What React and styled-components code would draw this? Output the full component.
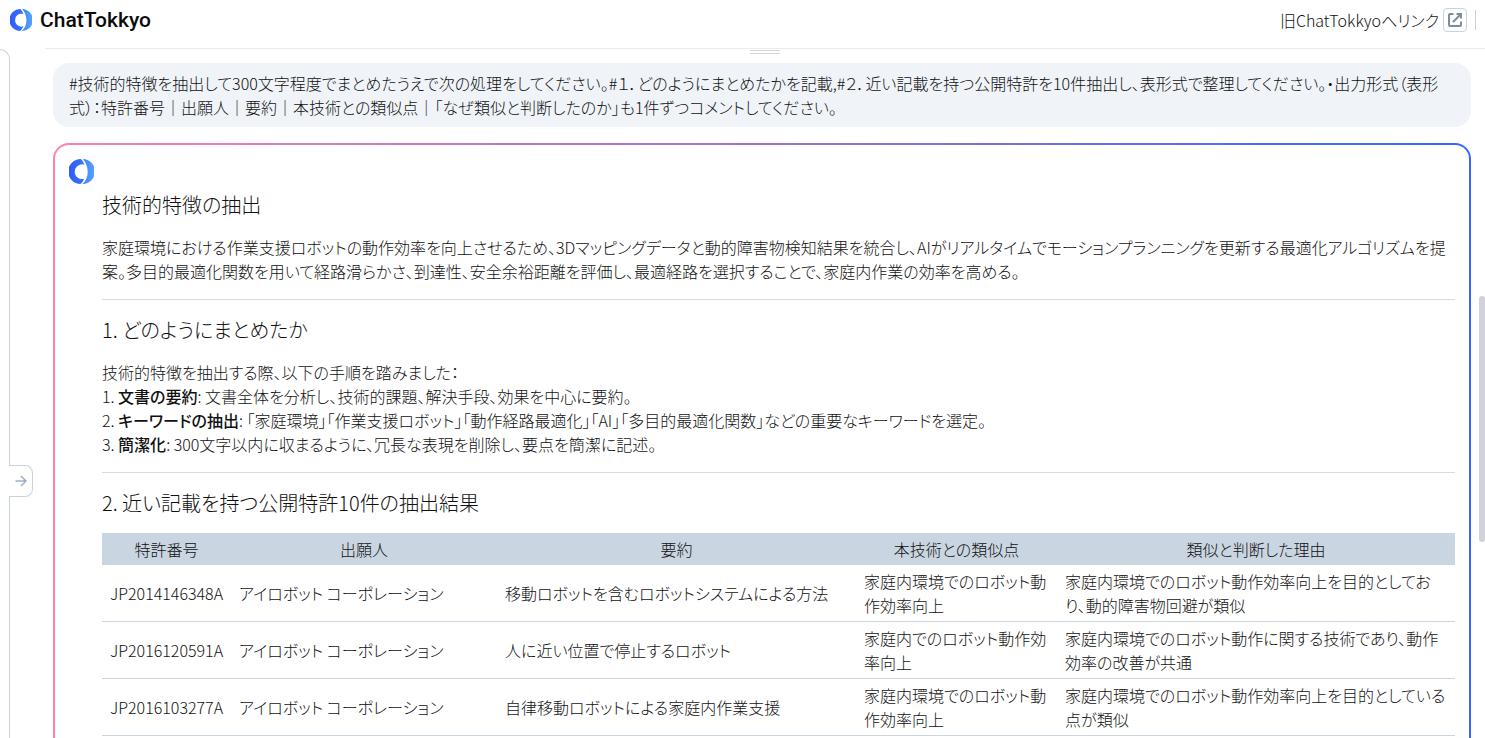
import React, { useId } from "react";
import styled, { createGlobalStyle } from "styled-components";

const GlobalStyle = createGlobalStyle`
  *, *::before, *::after { box-sizing: border-box; }
  html, body, #root { height: 100%; }
  body {
    margin: 0;
    overflow: hidden;
    background: #fff;
    color: #111;
    font-family: "Noto Sans CJK JP Light", "Noto Sans CJK JP", "Noto Sans", sans-serif;
    font-size: 16px;
    font-weight: 300;
    line-height: 24px;
    font-feature-settings: "palt";
  }
`;

const Page = styled.div`
  display: flex;
  flex-direction: column;
  height: 100vh;
`;

const Header = styled.header`
  display: flex;
  flex: none;
  align-items: center;
  justify-content: space-between;
  height: 48px;
  padding: 0 0 8px 10px;
`;

const Brand = styled.h1`
  display: flex;
  align-items: center;
  gap: 8px;
  margin: 0;
  color: #0b0b0d;
  font-family: Roboto, "Liberation Sans", sans-serif;
  font-size: 21px;
  font-weight: 500;
  font-feature-settings: normal;
`;

const HeaderTools = styled.div`
  display: flex;
  align-items: center;
  gap: 8px;
  padding-right: 9px;
`;

const LegacyLink = styled.a`
  display: flex;
  align-items: center;
  gap: 4px;
  color: inherit;
  text-decoration: none;
`;

const IconFrame = styled.span`
  display: flex;
  align-items: center;
  justify-content: center;
  width: 24px;
  height: 24px;
  border: 1px solid #c8d3e0;
  border-radius: 4px;
  color: #7f8ba3;
`;

const Separator = styled.span`
  width: 1px;
  height: 20px;
  background: #c8d3e0;
`;

const Body = styled.div`
  display: flex;
  flex: 1;
  min-height: 0;
`;

const Drawer = styled.aside`
  flex: none;
  width: 10px;
  margin-top: 1px;
  border: solid #c8d3e0;
  border-width: 1px 1px 0 0;
  border-top-right-radius: 10px;
`;

const DrawerHandle = styled.div`
  flex: none;
  align-self: center;
  width: 24px;
  margin-left: -1px;
  padding-top: 176px;
`;

const OpenButton = styled.button`
  display: flex;
  align-items: center;
  justify-content: center;
  width: 24px;
  height: 32px;
  padding: 0;
  border: 1px solid #c8d3e0;
  border-left: 0;
  border-radius: 0 8px 8px 0;
  background: #fff;
  color: #a0aec0;
`;

const Main = styled.main`
  display: flex;
  flex: 1;
  flex-direction: column;
  min-width: 0;
  margin-left: 12px;
  border-top: 1px solid #e9ebee;
`;

const Grip = styled.div`
  align-self: center;
  flex: none;
  width: 30px;
  height: 4px;
  margin-top: 1px;
  border: solid #d6d6d6;
  border-width: 1px 0;
`;

const ScrollArea = styled.div`
  display: flex;
  flex: 1;
  min-height: 0;
`;

const Thread = styled.div`
  display: flex;
  flex: 1;
  flex-direction: column;
  gap: 16px;
  min-width: 0;
  padding: 9px 8px 0;
  overflow: hidden;
`;

const Question = styled.p`
  flex: none;
  margin: 0;
  padding: 8px 16px;
  border-radius: 16px;
  background: #f0f4f9;
`;

const Answer = styled.article`
  display: flex;
  flex: none;
  flex-direction: column;
  padding: 14px 14px 80px;
  border: 2px solid transparent;
  border-radius: 16px;
  background:
    linear-gradient(#fff, #fff) padding-box,
    linear-gradient(90deg, #ff80ac, #3366ff) border-box;
`;

const AnswerBody = styled.div`
  padding: 7px 0 0 33px;
`;

const Section = styled.section`
  & + & {
    margin-top: 16px;
    padding-top: 16px;
    border-top: 1px solid #d5dce5;
  }
`;

const Title = styled.h2`
  margin: 0 0 16px;
  font-size: 20px;
  font-weight: 300;
  line-height: 28px;
`;

const Text = styled.p`
  margin: 0;
`;

const Term = styled.strong`
  font-family: "Noto Sans CJK JP Medium", "Noto Sans CJK JP", sans-serif;
  font-weight: 500;
`;

const Table = styled.table`
  width: 100%;
  border-collapse: collapse;
  table-layout: fixed;
`;

const Col = styled.col`
  width: ${({ $width }) => $width};
`;

const HeadCell = styled.th`
  padding: 4px 8px;
  background: #c9d5e1;
  font-weight: 300;
  text-align: center;
`;

const Cell = styled.td`
  padding: 4px 8px;
  border-bottom: 1px solid #c9d5e1;
`;

const ScrollThumb = styled.div`
  flex: none;
  width: 6px;
  height: 246px;
  margin-top: 242px;
  border-radius: 3px;
  background: #d0d3dc;
`;

function Logo({ size }) {
  const id = useId();
  return (
    <svg width={size} height={size} viewBox="0 0 25 25" aria-hidden="true">
      <defs>
        <linearGradient id={`${id}l`} x1="0" x2="1">
          <stop offset="0" stopColor="#2f5df8" />
          <stop offset="1" stopColor="#3a72fa" />
        </linearGradient>
        <linearGradient id={`${id}r`} x1="0" x2="1">
          <stop offset="0" stopColor="#3d80fb" />
          <stop offset="1" stopColor="#55a6ff" />
        </linearGradient>
      </defs>
      <path
        fill={`url(#${id}l)`}
        d="M12 0A12.5 12.5 0 0 0 11.5 25Q14 22.800 15.200 19.700A7.200 7.200 0 0 1 5.800 12.500A7.200 7.200 0 0 1 15.300 5.700Q14.200 2.400 12 0Z"
      />
      <path
        fill={`url(#${id}r)`}
        d="M13.800 0A12.5 12.5 0 0 1 13.200 25C20.200 20 20.600 7 13.800 0Z"
      />
    </svg>
  );
}

function OpenIcon() {
  return (
    <svg width="16" height="16" viewBox="0 0 16 16" fill="none" stroke="currentColor" strokeWidth="2" aria-hidden="true">
      <path d="M6.5 2H3a1 1 0 0 0-1 1v10a1 1 0 0 0 1 1h10a1 1 0 0 0 1-1V9.500" />
      <path d="M9.500 2H14v4.500M13.500 2.500L6 10" />
    </svg>
  );
}

function ArrowIcon() {
  return (
    <svg width="12" height="12" viewBox="0 0 12 12" fill="none" stroke="currentColor" strokeWidth="1.500" aria-hidden="true">
      <path d="M0.500 6H11M6 1L11 6L6 11" />
    </svg>
  );
}

const steps = [
  ["文書の要約", "文書全体を分析し、技術的課題、解決手段、効果を中心に要約。"],
  ["キーワードの抽出", "「家庭環境」「作業支援ロボット」「動作経路最適化」「AI」「多目的最適化関数」などの重要なキーワードを選定。"],
  ["簡潔化", "300文字以内に収まるように、冗長な表現を削除し、要点を簡潔に記述。"],
];

const columns = [
  ["特許番号", "129px"],
  ["出願人", "266px"],
  ["要約", "359px"],
  ["本技術との類似点", "201px"],
  ["類似と判断した理由", "auto"],
];

const patents = [
  ["JP2014146348A", "アイロボット コーポレーション", "移動ロボットを含むロボットシステムによる方法", "家庭内環境でのロボット動作効率向上", "家庭内環境でのロボット動作効率向上を目的としており、動的障害物回避が類似"],
  ["JP2016120591A", "アイロボット コーポレーション", "人に近い位置で停止するロボット", "家庭内でのロボット動作効率向上", "家庭内環境でのロボット動作に関する技術であり、動作効率の改善が共通"],
  ["JP2016103277A", "アイロボット コーポレーション", "自律移動ロボットによる家庭内作業支援", "家庭内環境でのロボット動作効率向上", "家庭内環境でのロボット動作効率向上を目的としている点が類似"],
];

export default function App() {
  return (
    <Page lang="ja">
      <GlobalStyle />
      <Header>
        <Brand>
          <Logo size={22} />
          ChatTokkyo
        </Brand>
        <HeaderTools>
          <LegacyLink href="#legacy">
            旧ChatTokkyoへリンク
            <IconFrame>
              <OpenIcon />
            </IconFrame>
          </LegacyLink>
          <Separator />
        </HeaderTools>
      </Header>
      <Body>
        <Drawer />
        <DrawerHandle>
          <OpenButton type="button" aria-label="パネルを開く">
            <ArrowIcon />
          </OpenButton>
        </DrawerHandle>
        <Main>
          <Grip />
          <ScrollArea>
            <Thread>
              <Question>
                #技術的特徴を抽出して300文字程度でまとめたうえで次の処理をしてください。#１．どのようにまとめたかを記載,#２．近い記載を持つ公開特許を10件抽出し、表形式で整理してください。・出力形式（表形式）：特許番号｜出願人｜要約｜本技術との類似点｜「なぜ類似と判断したのか」も1件ずつコメントしてください。
              </Question>
              <Answer>
                <Logo size={25} />
                <AnswerBody>
                  <Section>
                    <Title>技術的特徴の抽出</Title>
                    <Text>
                      家庭環境における作業支援ロボットの動作効率を向上させるため、3Dマッピングデータと動的障害物検知結果を統合し、AIがリアルタイムでモーションプランニングを更新する最適化アルゴリズムを提案。多目的最適化関数を用いて経路滑らかさ、到達性、安全余裕距離を評価し、最適経路を選択することで、家庭内作業の効率を高める。
                    </Text>
                  </Section>
                  <Section>
                    <Title>1. どのようにまとめたか</Title>
                    <Text>技術的特徴を抽出する際、以下の手順を踏みました：</Text>
                    {steps.map(([name, detail], i) => (
                      <Text key={name}>
                        {i + 1}. <Term>{name}</Term>: {detail}
                      </Text>
                    ))}
                  </Section>
                  <Section>
                    <Title>2. 近い記載を持つ公開特許10件の抽出結果</Title>
                    <Table>
                      <colgroup>
                        {columns.map(([name, width]) => (
                          <Col key={name} $width={width} />
                        ))}
                      </colgroup>
                      <thead>
                        <tr>
                          {columns.map(([name]) => (
                            <HeadCell key={name} scope="col">{name}</HeadCell>
                          ))}
                        </tr>
                      </thead>
                      <tbody>
                        {patents.map((row) => (
                          <tr key={row[0]}>
                            {row.map((value, i) => (
                              <Cell key={i}>{value}</Cell>
                            ))}
                          </tr>
                        ))}
                      </tbody>
                    </Table>
                  </Section>
                </AnswerBody>
              </Answer>
            </Thread>
            <ScrollThumb />
          </ScrollArea>
        </Main>
      </Body>
    </Page>
  );
}
